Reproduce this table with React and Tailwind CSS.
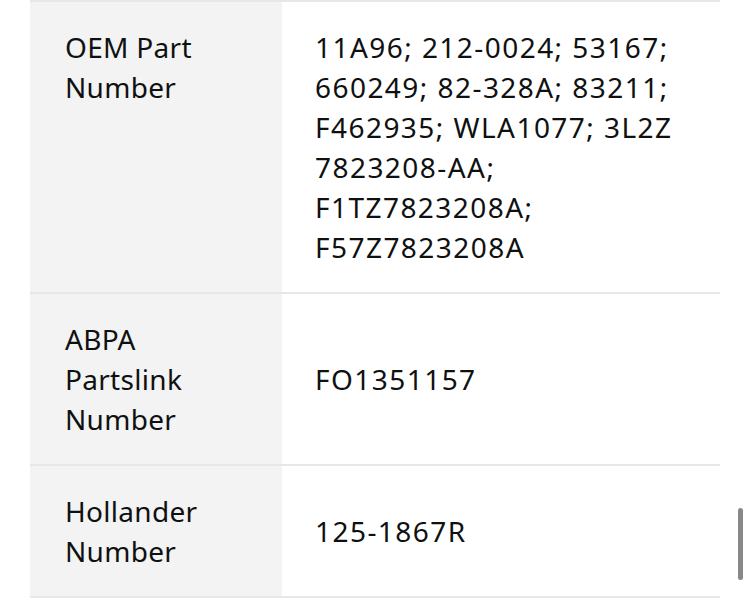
export default function App() {
  const rows = [
    {
      label: ["OEM Part", "Number"],
      value: [
        "11A96; 212-0024; 53167;",
        "660249; 82-328A; 83211;",
        "F462935; WLA1077; 3L2Z",
        "7823208-AA;",
        "F1TZ7823208A;",
        "F57Z7823208A",
      ],
    },
    { label: ["ABPA", "Partslink", "Number"], value: ["FO1351157"] },
    { label: ["Hollander", "Number"], value: ["125-1867R"] },
  ];
  return (
    <div
      className="relative w-[750px] h-[607px] bg-white overflow-hidden text-[#0f1111]"
      style={{ fontFamily: '"Noto Sans", "Open Sans", sans-serif' }}
    >
      <div className="ml-[30px] w-[690px] border-t-2 border-[#e7e7e7]">
        {rows.map((r, i) => (
          <div key={i} className="flex border-b-2 border-[#e7e7e7]">
            <div className="w-[252px] shrink-0 bg-[#f3f3f3] pl-[35px] py-[25px] text-[28px] leading-[40px] tracking-[0.3px]">
              {r.label.map((l, j) => (
                <div key={j}>{l}</div>
              ))}
            </div>
            <div className="flex-1 flex flex-col justify-center pl-[33px] py-[25px] text-[28px] leading-[40px] tracking-[1.45px] whitespace-nowrap">
              {r.value.map((l, j) => (
                <div key={j}>{l}</div>
              ))}
            </div>
          </div>
        ))}
      </div>
      <div className="absolute left-[738px] top-[508px] w-[5px] h-[72px] rounded-full bg-[#888888]" />
    </div>
  );
}
